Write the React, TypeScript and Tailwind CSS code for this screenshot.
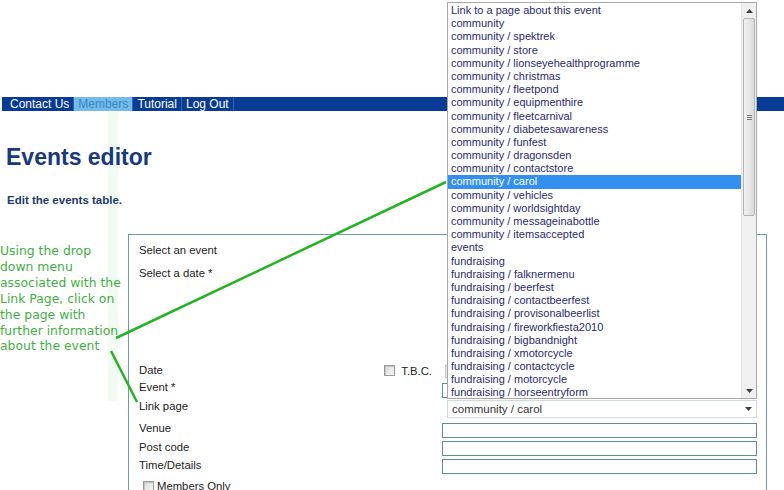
import React from 'react';

const pages = [
  'Link to a page about this event',
  'community',
  'community / spektrek',
  'community / store',
  'community / lionseyehealthprogramme',
  'community / christmas',
  'community / fleetpond',
  'community / equipmenthire',
  'community / fleetcarnival',
  'community / diabetesawareness',
  'community / funfest',
  'community / dragonsden',
  'community / contactstore',
  'community / carol',
  'community / vehicles',
  'community / worldsightday',
  'community / messageinabottle',
  'community / itemsaccepted',
  'events',
  'fundraising',
  'fundraising / falknermenu',
  'fundraising / beerfest',
  'fundraising / contactbeerfest',
  'fundraising / provisonalbeerlist',
  'fundraising / fireworkfiesta2010',
  'fundraising / bigbandnight',
  'fundraising / xmotorcycle',
  'fundraising / contactcycle',
  'fundraising / motorcycle',
  'fundraising / horseentryform',
];

const selected = 'community / carol';

function Checkbox() {
  return (
    <span className="inline-block w-[11px] h-[11px] border border-[#9a9a9a] bg-gradient-to-br from-[#dcdcdc] to-[#f4f4f4] shadow-[inset_1px_1px_0_#c4c4c4]" />
  );
}

function TextInput() {
  return <div className="w-[315px] h-[15px] border border-[#5d8f9a] bg-white" />;
}

function Arrow({ up }: { up?: boolean }) {
  return (
    <svg width="7" height="4" viewBox="0 0 7 4">
      <path d={up ? 'M0 4L3.5 0L7 4Z' : 'M0 0L3.5 4L7 0Z'} fill="#404040" />
    </svg>
  );
}

function PageList() {
  return (
    <div className="absolute left-[447px] top-[2px] w-[310px] h-[397px] border border-[#a8a8a8] bg-white flex">
      <ul className="flex-1 pt-[1px] text-[11px] leading-[13.2px] text-[#2a2a70]">
        {pages.map((p) => (
          <li
            key={p}
            className={
              p === selected
                ? 'h-[13.2px] pl-[3px] bg-[#3390f0] text-white whitespace-nowrap'
                : 'h-[13.2px] pl-[3px] whitespace-nowrap'
            }
          >
            {p}
          </li>
        ))}
      </ul>
      {/* scrollbar */}
      <div className="w-[15px] bg-[#f0f0f0] border-l border-[#e4e4e4] flex flex-col">
        <div className="h-[15px] flex items-center justify-center bg-[#f0f0f0]">
          <Arrow up />
        </div>
        <div className="mx-[1px] h-[198px] rounded-[2px] border border-[#b4b4b4] bg-gradient-to-r from-[#f2f2f2] to-[#dadada] flex items-center justify-center">
          <div className="flex flex-col gap-[1px]">
            <span className="block w-[5px] h-px bg-[#7a7a7a]" />
            <span className="block w-[5px] h-px bg-[#7a7a7a]" />
            <span className="block w-[5px] h-px bg-[#7a7a7a]" />
          </div>
        </div>
        <div className="flex-1" />
        <div className="h-[15px] flex items-center justify-center">
          <Arrow />
        </div>
      </div>
    </div>
  );
}

export default function App() {
  return (
    <div className="relative w-[784px] h-[490px] overflow-hidden bg-white font-['Liberation_Sans',Arial,sans-serif]">
      {/* faint stripe behind content */}
      <div className="absolute left-[108px] top-[111px] w-[10px] h-[290px] bg-[#f2fbf3]" />

      <div className="relative">
        <div className="h-[97px]" />
        <nav className="ml-[2px] pl-[4px] h-[14px] bg-[#073b95] flex text-[12px] leading-[14px] text-white">
          <span className="px-[4px] border-r border-[#3464b0]">Contact Us</span>
          <span className="px-[4px] bg-[#72bde8] text-[#3c86cc] border-r border-[#3464b0]">Members</span>
          <span className="px-[4px] border-r border-[#3464b0]">Tutorial</span>
          <span className="px-[4px] border-r border-[#3464b0]">Log Out</span>
        </nav>

        <h1 className="mt-[32px] ml-[6px] h-[28px] text-[23px] leading-[28px] font-bold text-[#173a7c]">
          Events editor
        </h1>
        <p className="mt-[22px] ml-[7px] h-[14px] text-[11.5px] leading-[14px] font-bold text-[#1e3a6e]">
          Edit the events table.
        </p>

        <div className="mt-[27px] flex">
          <div className="w-[128px] pt-[9px] font-['DejaVu_Sans',Verdana,sans-serif] text-[12.4px] leading-[15.9px] text-[#3fb03f]">
            Using the drop
            <br />
            down menu
            <br />
            associated with the
            <br />
            Link Page, click on
            <br />
            the page with
            <br />
            further information
            <br />
            about the event
          </div>

          <div className="w-[639px] h-[300px] border-l border-t border-r border-[#6a9caa] pt-[7px] text-[11.3px] leading-[16px] text-[#222]">
            <div className="h-[16px] pl-[10px]">Select an event</div>
            <div className="mt-[7px] h-[16px] pl-[10px]">Select a date *</div>
            <div className="h-[81px]" />

            <div className="h-[17px] flex">
              <div className="w-[313px] pl-[10px] pr-[10px] flex justify-between">
                <span>Date</span>
                <span className="flex items-center gap-[6px]">
                  <Checkbox />
                  T.B.C.
                </span>
              </div>
              <div className="mt-[3px] ml-[3px] w-[40px] h-[13px] bg-[#e4e4e4] border border-[#c8c8c8]" />
            </div>

            <div className="h-[17px] flex">
              <div className="w-[313px] pl-[10px]">Event *</div>
              <div className="mt-[4px]">
                <TextInput />
              </div>
            </div>

            <div className="h-[24px] flex">
              <div className="w-[313px] pl-[10px] pt-[2px]">Link page</div>
              <div className="mt-[4px] ml-[5px] w-[310px] h-[18px] border border-[#cfdadf] bg-white flex items-center justify-between pl-[4px] pr-[4px] text-[11.5px] text-[#333]">
                <span>{selected}</span>
                <Arrow />
              </div>
            </div>

            <div className="h-[18px] flex">
              <div className="w-[313px] pl-[10px]">Venue</div>
              <div className="mt-[3px]">
                <TextInput />
              </div>
            </div>
            <div className="h-[18px] flex">
              <div className="w-[313px] pl-[10px] pt-[1px]">Post code</div>
              <div className="mt-[3px]">
                <TextInput />
              </div>
            </div>
            <div className="h-[18px] flex">
              <div className="w-[313px] pl-[10px] pt-[1px]">Time/Details</div>
              <div className="mt-[3px]">
                <TextInput />
              </div>
            </div>
            <div className="h-[20px] pl-[14px] pt-[4px] flex items-start gap-[3px]">
              <span className="mt-[2px]">
                <Checkbox />
              </span>
              Members Only
            </div>
          </div>
        </div>
      </div>

      <PageList />

      {/* annotation pointers */}
      <svg className="absolute inset-0 pointer-events-none" width="784" height="490">
        <line x1="116" y1="338" x2="446" y2="182" stroke="#22b422" strokeWidth="2.5" />
        <line x1="111" y1="351" x2="137" y2="402" stroke="#22b422" strokeWidth="2.5" />
      </svg>
    </div>
  );
}
